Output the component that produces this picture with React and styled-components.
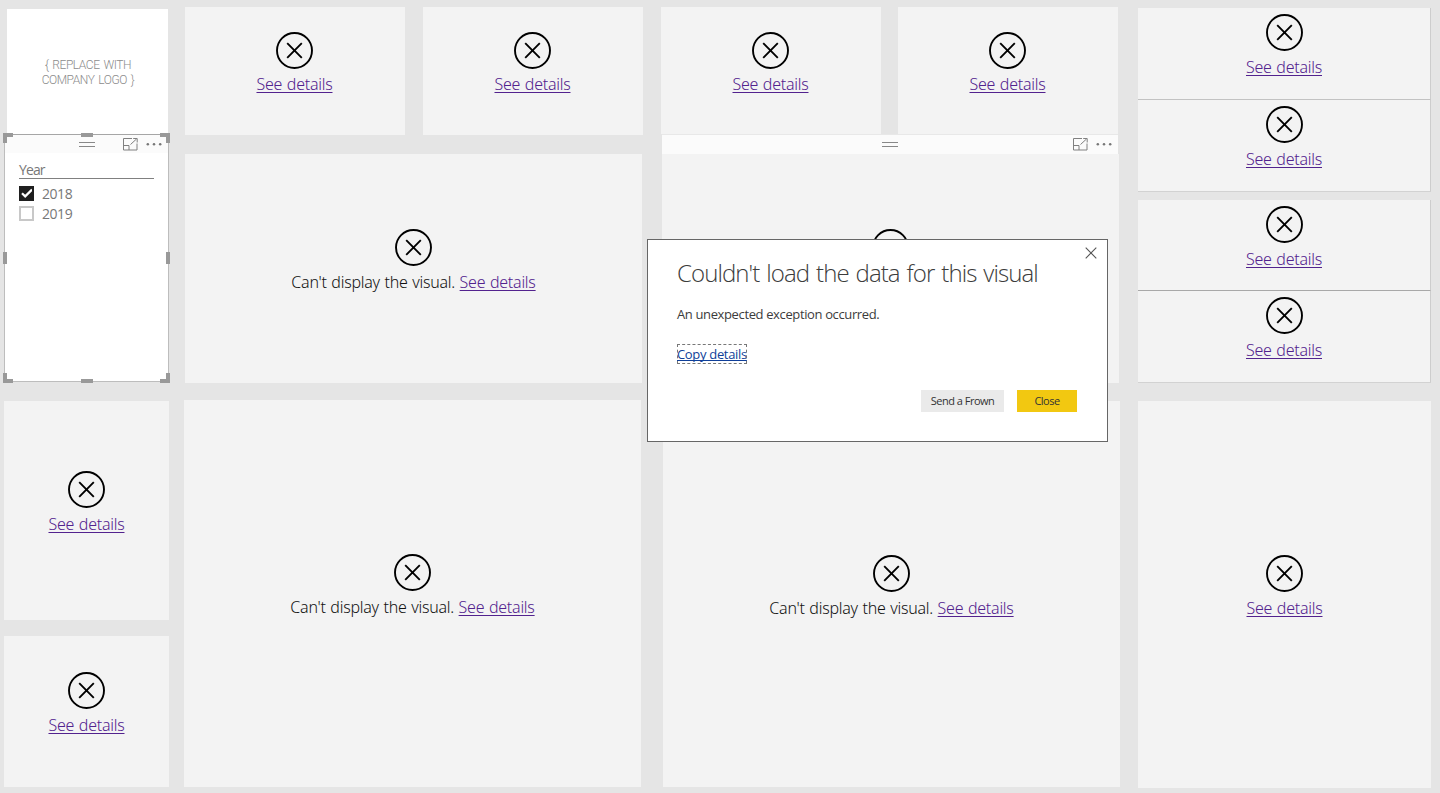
import React from 'react'
import styled, { createGlobalStyle, css } from 'styled-components'

const GlobalStyle = createGlobalStyle`
  * {
    box-sizing: border-box;
  }
  body {
    margin: 0;
    background: #e5e5e5;
    font-family: "Noto Sans", "Open Sans", sans-serif;
    overflow: hidden;
  }
`

const Board = styled.main`
  position: relative;
  display: flex;
  width: 1440px;
  height: 793px;
  background: #e5e5e5;
`

const Column = styled.div`
  display: flex;
  flex-direction: column;
  flex: none;
  width: ${props => props.width}px;
  margin-left: ${props => props.left}px;
  padding-top: ${props => props.top}px;
`

const KpiRow = styled.div`
  display: flex;
  justify-content: space-between;
  width: ${props => props.width}px;
  margin-left: ${props => props.left || 0}px;
`

const Tile = styled.section`
  display: flex;
  flex-direction: column;
  align-items: center;
  gap: ${props => (props.kpi ? 4 : 5)}px;
  flex: none;
  width: ${props => (props.width ? props.width + 'px' : 'auto')};
  height: ${props => props.height}px;
  margin-top: ${props => props.gap || 0}px;
  margin-left: ${props => props.left || 0}px;
  padding-top: ${props => props.inset}px;
  background: #f3f3f3;
  ${props => props.kpi && css`
    width: 220px;
    padding-right: 1px;
  `}
  ${props => props.line && css`
    border-right: 1px solid #cdcdcd;
    border-bottom: 1px solid ${props.line};
  `}
`

const ErrorText = styled.p`
  margin: 0;
  font-size: 16px;
  font-weight: 300;
  line-height: 22px;
  letter-spacing: -0.24px;
  word-spacing: 0.7px;
  white-space: nowrap;
  color: #111;
`

const DetailsLink = styled.a`
  color: #52228e;
  text-decoration: underline;
  text-decoration-thickness: 1px;
  text-underline-offset: 2px;
  text-decoration-skip-ink: none;
  cursor: pointer;
`

const LogoBox = styled.div`
  display: flex;
  align-items: center;
  justify-content: center;
  flex: none;
  width: 161px;
  height: 125px;
  margin-left: 3px;
  padding: 3px 0 0 1px;
  background: #fff;
  font-family: Roboto, sans-serif;
  font-size: 12px;
  font-weight: 300;
  line-height: 14.6px;
  letter-spacing: -0.45px;
  word-spacing: 1.4px;
  text-align: center;
  color: #8c8c8c;
`

const Slicer = styled.section`
  position: relative;
  flex: none;
  width: 165px;
  height: 248px;
  border: 1px solid #bdbdbd;
  border-top-color: #a6a6a6;
  background: #fff;
`

const Handle = styled.span`
  position: absolute;
  width: ${props => props.w}px;
  height: ${props => props.h}px;
  ${props => props.place}
  background: ${props => (props.corner ? 'none' : '#999')};
  border: 0 solid #999;
  border-width: ${props => props.corner || 0};
`

const VisualHeader = styled.header`
  display: grid;
  grid-template-columns: 1fr 16px 1fr;
  align-items: center;
  flex: none;
  width: ${props => (props.width ? props.width + 'px' : 'auto')};
  height: ${props => props.height}px;
  margin-left: ${props => props.left || 0}px;
  background: #fbfbfb;
  ${props => props.line && css`border-top: 1px solid #e8e8e8;`}
`

const HeaderTools = styled.div`
  grid-column: 3;
  display: flex;
  justify-content: flex-end;
  gap: 8px;
  padding-right: ${props => props.end}px;
`

const Grip = styled.span`
  grid-column: 2;
  height: 5px;
  border: 1px solid #888;
  border-width: 1px 0;
`

const SlicerBody = styled.div`
  padding: 8px 14px 0;
  font-family: "Open Sans", sans-serif;
  font-size: 14px;
  color: #777;
`

const SlicerTitle = styled.h4`
  margin: 0 0 5px;
  border-bottom: 1px solid #808080;
  font-size: 14px;
  font-weight: 400;
  line-height: 17px;
  letter-spacing: -0.9px;
`

const Option = styled.label`
  display: flex;
  align-items: center;
  gap: 8px;
  height: 20px;
  line-height: 20px;
  letter-spacing: -0.45px;
`

const CheckBox = styled.span`
  width: 15px;
  height: 15px;
  margin-bottom: 1px;
  border: 2px solid ${props => (props.checked ? '#1f1f1f' : '#c8c8c8')};
  background: ${props => (props.checked ? '#1f1f1f' : '#fff')};

  svg {
    display: block;
  }
`

const Dialog = styled.div`
  position: absolute;
  left: 647px;
  top: 239px;
  width: 461px;
  height: 203px;
  padding: 17px 30px 0 29px;
  border: 1px solid #666;
  background: #fff;
  font-family: "Open Sans", sans-serif;
  color: #3c3c3c;
`

const DialogClose = styled.button`
  position: absolute;
  top: 7px;
  right: 10px;
  width: 12px;
  height: 12px;
  padding: 0;
  border: 0;
  background: none;

  svg {
    display: block;
  }
`

const DialogTitle = styled.h2`
  margin: 0;
  font-size: 24px;
  font-weight: 300;
  line-height: 32px;
  letter-spacing: -0.9px;
  word-spacing: 1.5px;
  white-space: nowrap;
`

const DialogText = styled.p`
  margin: 16px 0 21px;
  font-size: 13px;
  line-height: 18px;
  letter-spacing: -0.37px;
`

const CopyLink = styled.a`
  display: block;
  width: 70px;
  height: 20px;
  outline: 1px dashed #777;
  outline-offset: -1px;
  font-size: 13px;
  line-height: 20px;
  letter-spacing: -0.32px;
  white-space: nowrap;
  color: #0f3f99;
  text-decoration: underline;
  text-decoration-skip-ink: none;
`

const DialogActions = styled.div`
  display: flex;
  justify-content: flex-end;
  gap: 13px;
  margin-top: 26px;
`

const ActionButton = styled.button`
  width: ${props => props.width}px;
  height: 22px;
  padding: 0;
  border: 0;
  background: ${props => (props.primary ? '#f2c811' : '#eaeaea')};
  font-family: "Open Sans", sans-serif;
  font-size: 11px;
  line-height: 22px;
  letter-spacing: -0.5px;
  color: #333;
`

const ErrorIcon = () => (
  <svg width="37" height="37" viewBox="0 0 37 37" fill="none" stroke="#000" strokeWidth="1.9">
    <circle cx="18.5" cy="18.5" r="17.5" />
    <path d="M11.2 11.2 25.8 25.8M25.8 11.2 11.2 25.8" />
  </svg>
)

const FocusIcon = () => (
  <svg width="15" height="13" viewBox="0 0 15 13" fill="none" stroke="#808080">
    <path d="M9 .5H.5v11.5h13.5V5.5M.5 7.5h5.5v4.5M7.5 6.5 13.5 1M10.2.5h4v4" />
  </svg>
)

const MoreIcon = () => (
  <svg width="16" height="13" viewBox="0 0 16 13" fill="#777">
    <circle cx="1.8" cy="6.2" r="1.25" />
    <circle cx="8" cy="6.2" r="1.25" />
    <circle cx="14.2" cy="6.2" r="1.25" />
  </svg>
)

function ErrorTile({ message, ...tile }) {
  return (
    <Tile {...tile}>
      <ErrorIcon />
      <ErrorText>
        {message && "Can't display the visual. "}
        <DetailsLink>See details</DetailsLink>
      </ErrorText>
    </Tile>
  )
}

function HeaderBar({ end, ...bar }) {
  return (
    <VisualHeader {...bar}>
      <Grip />
      <HeaderTools end={end}>
        <FocusIcon />
        <MoreIcon />
      </HeaderTools>
    </VisualHeader>
  )
}

//Resize handles round the selected slicer: four corners, then the middle of each side
const handles = [
  { w: 10, h: 10, place: 'left: -2px; top: -2px;', corner: '4px 0 0 4px' },
  { w: 10, h: 10, place: 'right: -2px; top: -2px;', corner: '4px 4px 0 0' },
  { w: 10, h: 10, place: 'left: -2px; bottom: -2px;', corner: '0 0 4px 4px' },
  { w: 10, h: 10, place: 'right: -2px; bottom: -2px;', corner: '0 4px 4px 0' },
  { w: 12, h: 4, place: 'left: 76px; top: -2px;' },
  { w: 12, h: 4, place: 'left: 76px; bottom: -2px;' },
  { w: 4, h: 12, place: 'left: -2px; top: 117px;' },
  { w: 4, h: 12, place: 'right: -2px; top: 117px;' },
]

const years = [
  { label: '2018', checked: true },
  { label: '2019', checked: false },
]

function YearSlicer() {
  return (
    <Slicer>
      <HeaderBar height={18} end={6} />
      <SlicerBody>
        <SlicerTitle>Year</SlicerTitle>
        {years.map(({ label, checked }) => (
          <Option key={label}>
            <CheckBox checked={checked}>
              {checked && (
                <svg width="11" height="11" viewBox="0 0 11 11" fill="none" stroke="#fff" strokeWidth="2.2">
                  <path d="M1 5.2 4.2 8.4 11 1.6" />
                </svg>
              )}
            </CheckBox>
            {label}
          </Option>
        ))}
      </SlicerBody>
      {handles.map((handle, index) => <Handle key={index} {...handle} />)}
    </Slicer>
  )
}

function ErrorDialog() {
  return (
    <Dialog role="dialog">
      <DialogClose aria-label="Close">
        <svg width="12" height="12" viewBox="0 0 12 12" stroke="#555" strokeWidth="1.1">
          <path d="M.7.7 11.3 11.3M11.3.7.7 11.3" />
        </svg>
      </DialogClose>
      <DialogTitle>Couldn't load the data for this visual</DialogTitle>
      <DialogText>An unexpected exception occurred.</DialogText>
      <CopyLink>Copy details</CopyLink>
      <DialogActions>
        <ActionButton width={83}>Send a Frown</ActionButton>
        <ActionButton width={60} primary>Close</ActionButton>
      </DialogActions>
    </Dialog>
  )
}

export default function App() {
  return (
    <>
      <GlobalStyle />
      <Board>
        <Column width={165} left={4} top={9}>
          <LogoBox>{'{ REPLACE WITH'}<br />{'COMPANY LOGO }'}</LogoBox>
          <YearSlicer />
          <ErrorTile height={219} gap={19} inset={70} />
          <ErrorTile height={151} gap={16} inset={36} />
        </Column>

        <Column width={459} left={15} top={7}>
          <KpiRow width={458} left={1}>
            <ErrorTile kpi height={128} inset={25} />
            <ErrorTile kpi height={128} inset={25} />
          </KpiRow>
          <ErrorTile message width={457} left={1} height={229} gap={19} inset={75} />
          <ErrorTile message width={457} height={387} gap={17} inset={154} />
        </Column>

        <Column width={459} left={18} top={7}>
          <KpiRow width={457}>
            <ErrorTile kpi height={127} inset={25} />
            <ErrorTile kpi height={127} inset={25} />
          </KpiRow>
          <HeaderBar width={456} left={1} height={20} line end={6} />
          {/* Only the icon: the dialog covers the rest of this tile */}
          <Tile width={457} left={1} height={229} inset={75}>
            <ErrorIcon />
          </Tile>
          <ErrorTile message width={457} left={2} height={386} gap={18} inset={154} />
        </Column>

        <Column width={293} left={18} top={8}>
          <ErrorTile height={92} inset={6} line="#c2c2c2" />
          <ErrorTile height={92} inset={6} line="#d2d2d2" />
          <ErrorTile height={91} gap={8} inset={6} line="#a8a8a8" />
          <ErrorTile height={92} inset={6} line="#d2d2d2" />
          <ErrorTile height={387} gap={18} inset={154} />
        </Column>

        <ErrorDialog />
      </Board>
    </>
  )
}
